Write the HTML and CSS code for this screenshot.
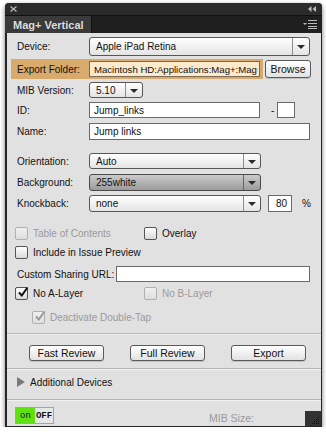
FILE: index.html
```html
<!DOCTYPE html>
<html lang="en">
<head>
    <meta charset="UTF-8">
    <title>Mag+ Vertical</title>
    <link rel="stylesheet" href="styles.css">
</head>
<body>
    <div class="window">
        <div class="titlebar">
            <svg class="close" width="7" height="6" viewBox="0 0 7 6"><path d="M0.5 0.5 L6.5 5.5 M6.5 0.5 L0.5 5.5" stroke="#bbb" stroke-width="1.2"/></svg>
            <svg class="collapse" width="8" height="6" viewBox="0 0 8 6"><path d="M3.5 0 L0 3 L3.5 6 Z M8 0 L4.5 3 L8 6 Z" fill="#bbb"/></svg>
        </div>
        <div class="tabbar">
            <div class="tab">Mag+ Vertical</div>
            <svg class="menu" width="14" height="9" viewBox="0 0 14 9"><path d="M0 3 L4 3 L2 5 Z" fill="#bbb"/><path d="M5 0.5 H14 M5 3.5 H14 M5 6.5 H14 M5 8.5 H14" stroke="#bbb" stroke-width="1"/></svg>
        </div>

        <div class="content">
            <div class="row row-device">
                <span class="label">Device:</span>
                <div class="select w-full"><span class="value">Apple iPad Retina</span><span class="arrow"></span></div>
            </div>

            <div class="row row-export">
                <div class="export-band">
                    <span class="label">Export Folder:</span>
                    <div class="field field-export"><span>Macintosh HD:Applications:Mag+:Mag+ F</span></div>
                </div>
                <button class="btn btn-browse">Browse</button>
            </div>

            <div class="row row-mib">
                <span class="label">MIB Version:</span>
                <div class="select w-mib"><span class="value">5.10</span><span class="arrow"></span></div>
            </div>

            <div class="row row-id">
                <span class="label">ID:</span>
                <div class="field field-id">Jump_links</div>
                <span class="dash">-</span>
                <div class="field field-small"></div>
            </div>

            <div class="row row-name">
                <span class="label">Name:</span>
                <div class="field w-full">Jump links</div>
            </div>

            <div class="row row-orientation">
                <span class="label">Orientation:</span>
                <div class="select w-mid"><span class="value">Auto</span><span class="arrow"></span></div>
            </div>

            <div class="row row-background">
                <span class="label">Background:</span>
                <div class="select select-dark w-mid"><span class="value">255white</span><span class="arrow"></span></div>
            </div>

            <div class="row row-knockback">
                <span class="label">Knockback:</span>
                <div class="select w-mid"><span class="value">none</span><span class="arrow"></span></div>
                <div class="field field-pct">80</div>
                <span class="pct">%</span>
            </div>

            <div class="row row-check row-toc">
                <div class="check-item disabled col-a"><span class="box"></span>Table of Contents</div>
                <div class="check-item"><span class="box"></span>Overlay</div>
            </div>

            <div class="row row-check row-include">
                <div class="check-item"><span class="box"></span>Include in Issue Preview</div>
            </div>

            <div class="row row-url">
                <span class="label label-url">Custom Sharing URL:</span>
                <div class="field w-url"></div>
            </div>

            <div class="row row-check row-layers">
                <div class="check-item col-a"><span class="box checked"><svg width="12" height="11" viewBox="0 0 12 11"><path d="M2 5.5 L4.8 8.5 L10.5 0.5" fill="none" stroke="#111" stroke-width="2"/></svg></span>No A-Layer</div>
                <div class="check-item disabled"><span class="box"></span>No B-Layer</div>
            </div>

            <div class="row row-check row-tap">
                <div class="check-item disabled"><span class="box checked"><svg width="12" height="11" viewBox="0 0 12 11"><path d="M2 5.5 L4.8 8.5 L10.5 0.5" fill="none" stroke="#999" stroke-width="2"/></svg></span>Deactivate Double-Tap</div>
            </div>

            <div class="separator sep-top"></div>

            <div class="actions">
                <button class="btn btn-action">Fast Review</button>
                <button class="btn btn-action">Full Review</button>
                <button class="btn btn-action">Export</button>
            </div>

            <div class="separator sep-mid"></div>

            <div class="disclosure">
                <span class="triangle"></span>Additional Devices
            </div>

            <div class="separator sep-bottom"></div>

            <div class="footer">
                <div class="toggle"><span class="on">on</span><span class="off">OFF</span></div>
                <span class="mib-size">MIB Size:</span>
                <div class="grip">
                    <svg width="9" height="9" viewBox="0 0 9 9" fill="#111">
                        <rect x="7" y="1" width="1" height="1"/>
                        <rect x="5" y="3" width="1" height="1"/><rect x="7" y="3" width="1" height="1"/>
                        <rect x="3" y="5" width="1" height="1"/><rect x="5" y="5" width="1" height="1"/><rect x="7" y="5" width="1" height="1"/>
                        <rect x="1" y="7" width="1" height="1"/><rect x="3" y="7" width="1" height="1"/><rect x="5" y="7" width="1" height="1"/><rect x="7" y="7" width="1" height="1"/>
                    </svg>
                </div>
            </div>
        </div>
    </div>
</body>
</html>
```

FILE: styles.css
```css
* {
    margin: 0;
    padding: 0;
    box-sizing: border-box;
}

body {
    background: #fff;
    font-family: "Liberation Sans", Arial, sans-serif;
    font-size: 10px;
    color: #111;
}

.window {
    margin: 3px 0 0 5px;
    width: 317px;
    height: 424px;
    background: #262626;
    border-radius: 4px 4px 0 0;
    padding: 0 1px 1px 2px;
    display: flex;
    flex-direction: column;
    box-shadow: 0 2px 5px rgba(0, 0, 0, 0.55);
}

.titlebar {
    height: 12px;
    display: flex;
    align-items: center;
    justify-content: space-between;
    padding: 0 6px 0 5px;
    background: #2b2b2b;
    border-radius: 4px 4px 0 0;
    margin: 0 -1px 0 -2px;
}

.tabbar {
    height: 18px;
    display: flex;
    align-items: stretch;
    justify-content: space-between;
    background: #1f1f1f;
    margin: 0 -1px 0 -2px;
    border-top: 1px solid #111;
    padding-right: 5px;
}

.tab {
    width: 87px;
    background: #3a3a3a;
    color: #dcdcdc;
    font-weight: bold;
    font-size: 11px;
    padding-left: 8px;
    display: flex;
    align-items: center;
    border-right: 1px solid #111;
}

.menu {
    align-self: center;
}

.content {
    flex: 1;
    background: #e1e1e1;
    display: flex;
    flex-direction: column;
    padding-top: 4px;
}

.row {
    display: flex;
    align-items: center;
    padding-left: 10px;
}

.label {
    width: 72px;
    flex-shrink: 0;
}

.row-device { height: 19px; }
.row-export {
    height: 20px;
    margin-top: 3px;
    padding-left: 4px;
}
.row-mib { height: 16px; margin-top: 3px; }
.row-id { height: 16px; margin-top: 4px; }
.row-name { height: 17px; margin-top: 5px; }
.row-orientation { height: 16px; margin-top: 13px; }
.row-background { height: 17px; margin-top: 5px; }
.row-knockback { height: 17px; margin-top: 4px; }
.row-toc { margin-top: 15px; }
.row-include { margin-top: 7px; }
.row-url { height: 16px; margin-top: 8px; }
.row-layers { margin-top: 5px; }

.row-check {
    height: 12px;
    padding-left: 8px;
}

.row-tap { margin-top: 12px; padding-left: 25px; }

.export-band {
    width: 252px;
    height: 20px;
    flex-shrink: 0;
    display: flex;
    align-items: center;
    padding-left: 6px;
    background: #d8aa6c;
}

/* dropdowns */
.select {
    height: 100%;
    flex-shrink: 0;
    display: flex;
    border: 1px solid #575757;
    border-radius: 3px;
    background: linear-gradient(#ffffff, #e4e4e4);
}

.select .value {
    flex: 1;
    padding-left: 6px;
    display: flex;
    align-items: center;
    white-space: nowrap;
    overflow: hidden;
}

.select .arrow {
    width: 17px;
    border-left: 1px solid #8c8c8c;
    display: flex;
    align-items: center;
    justify-content: center;
}

.select .arrow::after {
    content: "";
    border-left: 4px solid transparent;
    border-right: 4px solid transparent;
    border-top: 4px solid #2a2a2a;
    margin-top: 1px;
}

.select-dark {
    background: linear-gradient(#cbcbcb, #9b9b9b);
    border-color: #4a4a4a;
}

.select-dark .arrow {
    border-left-color: #666;
}

.w-full { width: 221px; }
.w-mid { width: 172px; }
.w-mib { width: 54px; }
.w-url { width: 194px; }

/* text fields */
.field {
    height: 100%;
    flex-shrink: 0;
    background: #fff;
    border: 1px solid #6a6a6a;
    padding-left: 4px;
    display: flex;
    align-items: center;
    white-space: nowrap;
    overflow: hidden;
}

.field-export {
    width: 171px;
    height: 16px;
    background: #fde9cb;
    border-color: #7a6a55;
    font-size: 9.6px;
}

.field-export span {
    display: block;
    width: 164px;
    overflow: hidden;
}

.field-id { width: 171px; }
.field-small { width: 18px; }
.field-pct {
    width: 24px;
    margin-left: 7px;
    justify-content: flex-end;
    padding-right: 4px;
}

.dash { margin: 0 0 0 11px; width: 6px; }
.pct { margin-left: 10px; }

.label-url { width: 99px; }

/* buttons */
.btn {
    font-family: inherit;
    font-size: 10.5px;
    color: #111;
    background: linear-gradient(#ffffff, #e2e2e2);
    border: 1px solid #5a5a5a;
    border-radius: 3px;
    box-shadow: 0 1px 0 rgba(0, 0, 0, 0.15);
}

.btn-browse {
    width: 46px;
    height: 18px;
    margin-left: 2px;
    flex-shrink: 0;
}

.actions {
    display: flex;
    justify-content: space-between;
    padding: 0 15px 0 22px;
    margin-top: 10px;
}

.btn-action {
    width: 75px;
    height: 16px;
}

/* checkboxes */
.check-item {
    display: flex;
    align-items: center;
    height: 12px;
}

.col-a { width: 129px; }

.box {
    width: 13px;
    height: 13px;
    border: 1px solid #555;
    border-radius: 2px;
    background: linear-gradient(#ffffff, #dadada);
    margin-right: 5px;
    position: relative;
    flex-shrink: 0;
}

.box svg {
    position: absolute;
    left: 1px;
    top: -1px;
}

.disabled {
    color: #9a9a9a;
}

.disabled .box {
    border-color: #b0b0b0;
    background: linear-gradient(#f0f0f0, #dedede);
}

/* separators */
.separator {
    height: 2px;
    border-top: 1px solid #b5b5b5;
    border-bottom: 1px solid #f2f2f2;
}

.sep-top { margin-top: 10px; }
.sep-mid { margin-top: 7px; }
.sep-bottom { margin-top: 12px; }

.disclosure {
    display: flex;
    align-items: center;
    padding-left: 10px;
    margin-top: 7px;
    height: 10px;
}

.triangle {
    width: 0;
    height: 0;
    border-top: 5px solid transparent;
    border-bottom: 5px solid transparent;
    border-left: 8px solid #7a7a7a;
    margin-right: 5px;
}

/* footer */
.footer {
    flex: 1;
    display: flex;
    align-items: flex-start;
    padding-left: 8px;
    padding-top: 6px;
}

.toggle {
    display: flex;
    height: 17px;
    border: 1px solid #a5a5a5;
    font-family: "Liberation Mono", monospace;
    font-size: 9px;
}

.toggle .on {
    width: 19px;
    background: #5fe010;
    display: flex;
    align-items: center;
    justify-content: center;
}

.toggle .off {
    width: 18px;
    background: #e6e6e6;
    font-weight: bold;
    display: flex;
    align-items: center;
    justify-content: center;
}

.mib-size {
    color: #9a9a9a;
    font-size: 10.5px;
    margin: 5px 0 0 155px;
}

.grip {
    margin-left: auto;
    align-self: flex-end;
    width: 16px;
    height: 15px;
    background: #333;
    display: flex;
    align-items: flex-end;
    justify-content: flex-end;
    padding: 0 1px 1px 0;
}
```
